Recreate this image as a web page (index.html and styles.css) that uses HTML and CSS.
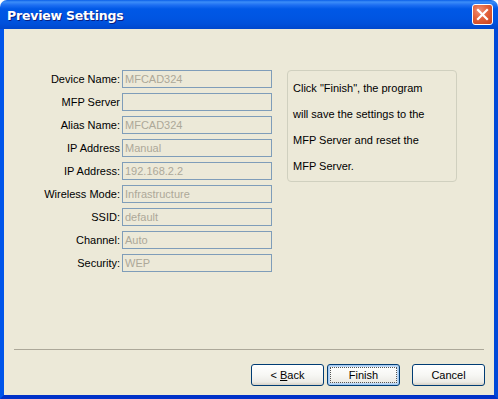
FILE: index.html
```html
<!DOCTYPE html>
<html>
<head>
<meta charset="utf-8">
<link rel="stylesheet" href="styles.css">
</head>
<body>
<div class="window">
  <div class="titlebar">
    <span class="title">Preview Settings</span>
    <span class="close"><svg width="13" height="13" viewBox="0 0 13 13"><path d="M2 2 L11 11 M11 2 L2 11" stroke="#fff" stroke-width="2.2" stroke-linecap="square"/></svg></span>
  </div>
  <div class="client">
    <div class="main">
      <div class="form">
        <label>Device Name:</label><div class="field">MFCAD324</div>
        <label>MFP Server</label><div class="field"></div>
        <label>Alias Name:</label><div class="field">MFCAD324</div>
        <label>IP Address</label><div class="field">Manual</div>
        <label>IP Address:</label><div class="field">192.168.2.2</div>
        <label>Wireless Mode:</label><div class="field">Infrastructure</div>
        <label>SSID:</label><div class="field">default</div>
        <label>Channel:</label><div class="field">Auto</div>
        <label>Security:</label><div class="field">WEP</div>
      </div>
      <div class="info">
        <p>Click "Finish", the program<br>will save the settings to the<br>MFP Server and reset the<br>MFP Server.</p>
      </div>
    </div>
    <div class="sep"></div>
    <div class="buttons">
      <button class="btn">&lt; <u>B</u>ack</button>
      <button class="btn default"><span class="focus">Finish</span></button>
      <button class="btn cancel">Cancel</button>
    </div>
  </div>
</div>
</body>
</html>
```
FILE: styles.css
```css
html, body {
  margin: 0;
  padding: 0;
  background: #fff;
}
.window {
  width: 498px;
  height: 399px;
  display: flex;
  flex-direction: column;
  font-family: "Liberation Sans", Arial, sans-serif;
  font-size: 11px;
  color: #000;
}
.titlebar {
  height: 29px;
  box-sizing: border-box;
  border-radius: 7px 7px 0 0;
  background: linear-gradient(to bottom, #0A5FE8 0px, #3C8EF8 2px, #1E6FF2 5px, #0058E6 9px, #0055E2 18px, #0050DA 24px, #0047CC 29px);
  display: flex;
  align-items: center;
  padding: 0 5px 0 7px;
  justify-content: space-between;
}
.title {
  color: #fff;
  font-family: "DejaVu Sans", sans-serif;
  font-weight: bold;
  font-size: 12.5px;
  letter-spacing: -0.2px;
  text-shadow: 1px 1px 0 #0A1E80;
  padding-top: 1px;
}
.close {
  width: 21px;
  height: 21px;
  box-sizing: border-box;
  border: 1px solid #fff;
  border-radius: 3px;
  background: radial-gradient(circle at 35% 30%, #F09078 0%, #E2613A 45%, #C8401C 100%);
  display: flex;
  align-items: center;
  justify-content: center;
}
.close svg { display: block; }
.client {
  flex: 1;
  background: #ECE9D8;
  border-left: 4px solid #0055EA;
  border-right: 4px solid #0049D8;
  border-bottom: 4px solid #0031C8;
  display: flex;
  flex-direction: column;
}
.main {
  display: flex;
  align-items: flex-start;
  padding: 41px 0 0 18px;
  height: 279px;
  box-sizing: border-box;
}
.form {
  display: grid;
  grid-template-columns: 98px 150px;
  column-gap: 2px;
  row-gap: 5px;
  grid-auto-rows: 18px;
}
.form label {
  text-align: right;
  line-height: 18px;
  white-space: nowrap;
}
.field {
  box-sizing: border-box;
  border: 1px solid #7F9DB9;
  color: #ACA899;
  line-height: 16px;
  padding-left: 2px;
  white-space: nowrap;
}
.info {
  margin-left: 15px;
  width: 170px;
  height: 112px;
  box-sizing: border-box;
  border: 1px solid #D0D0BF;
  border-radius: 4px;
  padding: 4px 4px 0 5px;
}
.info p {
  margin: 0;
  line-height: 26px;
  white-space: nowrap;
}
.sep {
  margin: 41px 10px 0 10px;
  height: 1px;
  background: #ACA899;
}
.buttons {
  display: flex;
  padding: 14px 0 0 247px;
}
.btn {
  width: 73px;
  height: 22px;
  box-sizing: border-box;
  border: 1px solid #003C74;
  border-radius: 3px;
  background: linear-gradient(to bottom, #FFFFFF 0%, #F7F7F4 50%, #ECEBE6 85%, #D6D0C5 100%);
  font-family: "Liberation Sans", Arial, sans-serif;
  font-size: 11px;
  color: #000;
  padding: 0;
  margin: 0;
}
.btn.default {
  margin-left: 3px;
  box-shadow: inset 0 0 0 1px #A6CAF0, inset 0 0 0 2px #C0DBF8;
  padding: 2px;
}
.focus {
  display: block;
  height: 100%;
  box-sizing: border-box;
  border: 1px dotted #555;
  line-height: 14px;
}
.btn.cancel {
  margin-left: 12px;
}
```
